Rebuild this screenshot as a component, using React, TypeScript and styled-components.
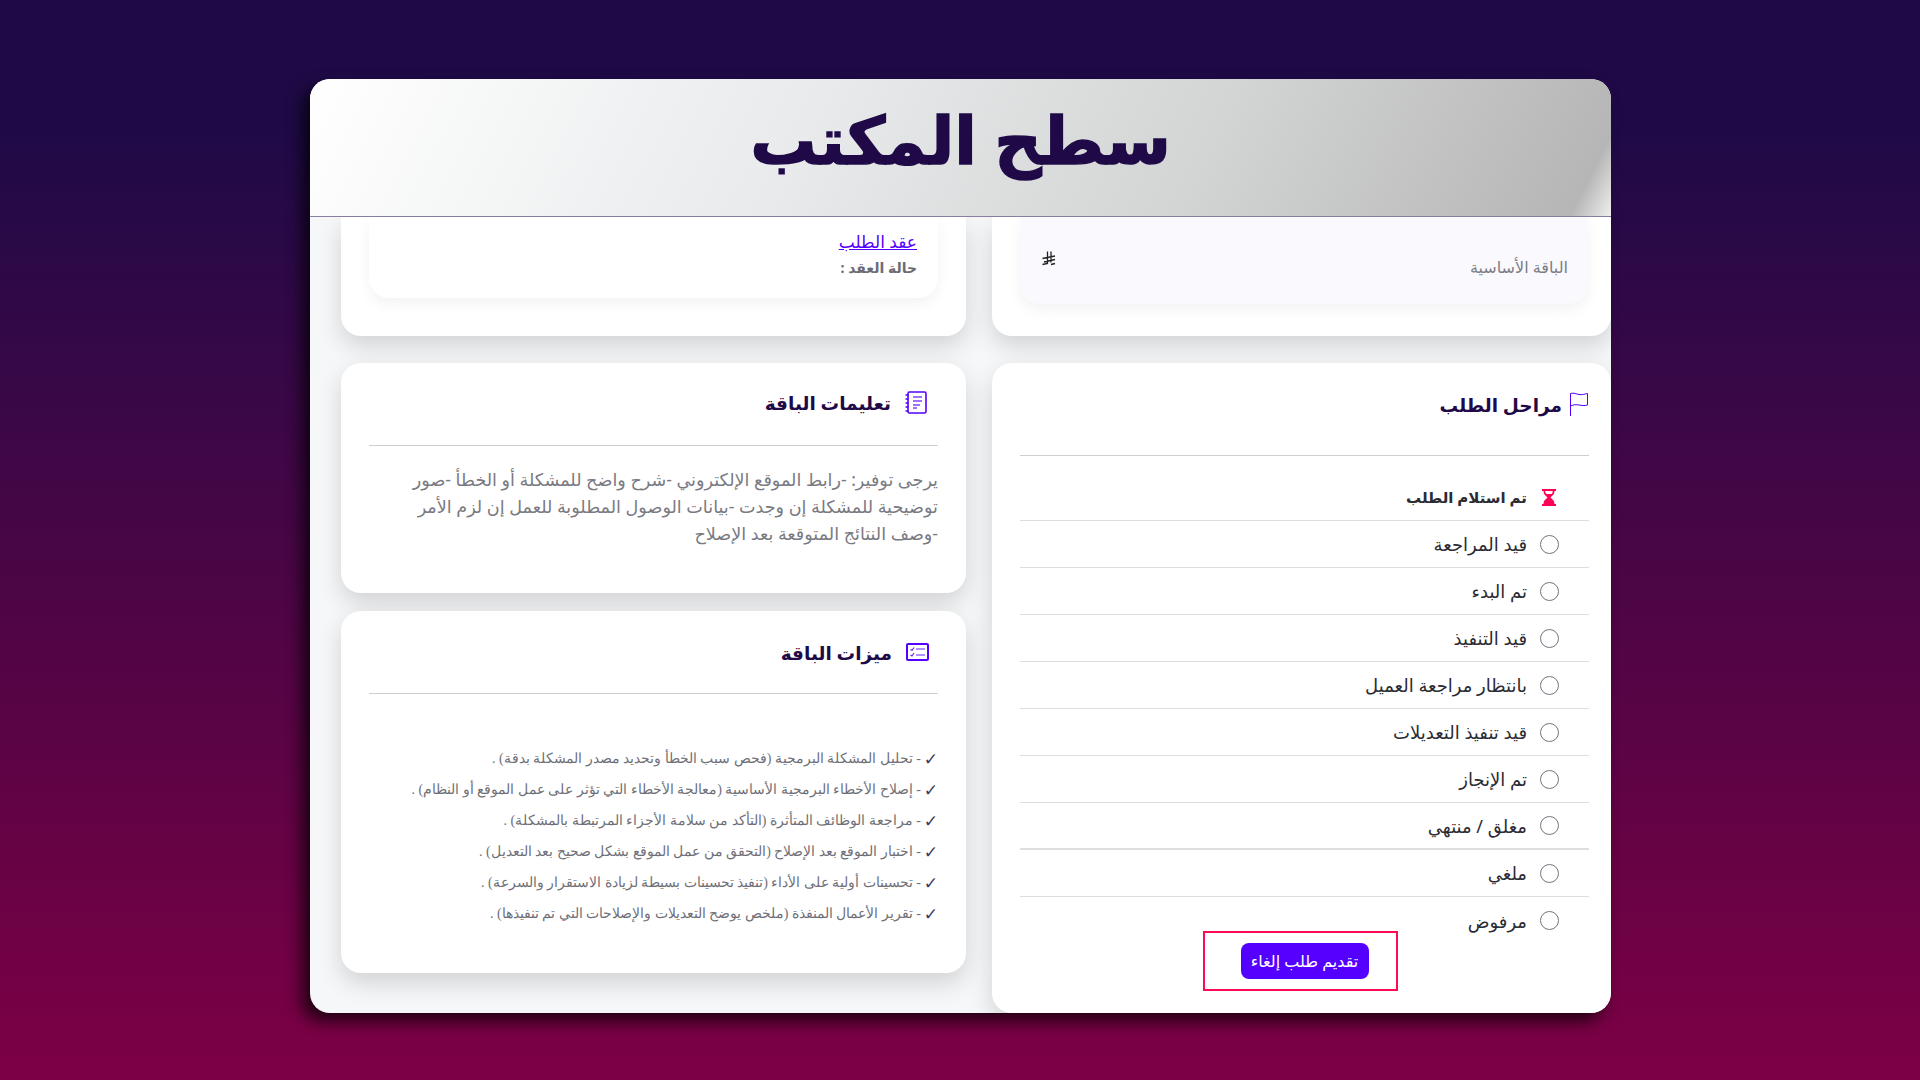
import styled, { createGlobalStyle } from "styled-components";

const GlobalStyle = createGlobalStyle`
  html, body {
    margin: 0;
    padding: 0;
    height: 100%;
  }
  body {
    font-family: "Noto Sans", "DejaVu Sans", sans-serif;
  }
  * {
    box-sizing: border-box;
  }
`

const Page = styled.div`
  width: 100%;
  height: 1080px;
  overflow: hidden;
  padding: 79px 309px 67px 310px;
  background: linear-gradient(180deg, #1f0a47 0%, #1f0a47 12%, #7d0044 100%);
`

const Window = styled.div`
  width: 1301px;
  height: 934px;
  direction: rtl;
  display: flex;
  flex-direction: column;
  overflow: hidden;
  background: #f6f7f9;
  border-radius: 20px;
  box-shadow: -8px 8px 16px rgba(0, 0, 0, 0.72);
`

const Header = styled.header`
  height: 138px;
  flex: none;
  display: flex;
  align-items: center;
  justify-content: center;
  padding-bottom: 20px;
  border-bottom: 1px solid #8a7ea0;
  background: linear-gradient(117deg, #ffffff 0%, #e8eaeb 38%, #d3d4d4 68%, #b6b6b6 97%, #efefef 100%);
`

const Title = styled.h1`
  margin: 0;
  font-size: 66px;
  font-weight: 700;
  color: #1f0a47;
  -webkit-text-stroke: 1.5px #1f0a47;
`

const Content = styled.main`
  flex: 1;
  display: grid;
  grid-template-columns: 619px 625px;
  grid-template-rows: 119px 650px;
  column-gap: 26px;
  row-gap: 27px;
  padding-left: 31px;
  overflow: hidden;
`

const ClippedCard = styled.section<{ tinted?: boolean }>`
  background: #fff;
  border-radius: 0 0 20px 20px;
  box-shadow: 0 10px 24px rgba(0, 0, 0, 0.15);
  padding: ${props => props.tinted ? "0 23px 0 28px" : "0 28px"};
`

const SummaryBox = styled.div<{ tinted?: boolean }>`
  display: flex;
  height: ${props => props.tinted ? "87px" : "81px"};
  padding: ${props => props.tinted ? "15px 20px 0 22px" : "12px 21px 0"};
  justify-content: space-between;
  background: ${props => props.tinted ? "#f9f9fe" : "#fff"};
  border-radius: 0 0 20px 20px;
  box-shadow: 0 6px 14px rgba(0, 0, 0, 0.05);
`

const Muted = styled.span`
  align-self: flex-end;
  margin-bottom: 27px;
  font-size: 16px;
  line-height: 20px;
  color: #7d7d85;
`

const RiyalSlot = styled.span`
  display: block;
  height: 15px;
  margin-top: 17px;
`

const ContractLink = styled.a`
  display: block;
  font-size: 17px;
  line-height: 26px;
  font-weight: 500;
  color: #5500ff;
  text-decoration: underline;
`

const ContractState = styled.div`
  font-size: 14px;
  line-height: 26px;
  font-weight: 700;
  color: #6c6c74;
`

const Card = styled.section`
  background: #fff;
  border-radius: 20px;
  box-shadow: 0 10px 24px rgba(0, 0, 0, 0.15);
  padding: 0 28px;
`

const StagesCard = styled(Card)`
  height: 650px;
  padding: 0 22px 0 28px;
`

const LeftColumn = styled.div`
  display: flex;
  flex-direction: column;
  gap: 18px;
`

const CardHead = styled.div<{ height: number; inset: number; lift: number }>`
  height: ${props => props.height}px;
  display: flex;
  align-items: center;
  gap: ${props => props.inset === 0 ? "7px" : "14px"};
  padding-right: ${props => props.inset}px;
  padding-bottom: ${props => props.lift}px;
  border-bottom: 1px solid #cfcfcf;
`

const CardTitle = styled.h2`
  margin: 0;
  font-size: 18.5px;
  font-weight: 700;
  color: #1f0a47;
`

const StageList = styled.ul`
  list-style: none;
  margin: 18px 0 0;
  padding: 0;
`

const StageRow = styled.li<{ heavyLine?: boolean; active?: boolean }>`
  height: 47px;
  display: flex;
  align-items: center;
  gap: 12px;
  padding-right: 30px;
  font-size: ${props => props.active ? "15px" : "18px"};
  font-weight: ${props => props.active ? 700 : 400};
  color: #2b2b33;
  border-bottom: ${props => props.heavyLine ? "2px" : "1px"} solid #dedede;

  &:last-child {
    border-bottom: none;
  }
`

const IconSlot = styled.span`
  width: 20px;
  height: 20px;
  flex: none;
  display: flex;
  align-items: center;
  justify-content: center;
`

const Radio = styled.span`
  width: 19px;
  height: 19px;
  flex: none;
  border: 1.5px solid #6f7580;
  border-radius: 50%;
`

const ActionFrame = styled.div`
  width: 195px;
  height: 60px;
  margin: -13px 191px 0 0;
  padding-left: 8px;
  display: flex;
  align-items: center;
  justify-content: center;
  border: 2px solid #ff0a54;
`

const CancelButton = styled.button`
  width: 128px;
  height: 36px;
  border: none;
  border-radius: 8px;
  background: #5500ff;
  color: #fff;
  font-family: inherit;
  font-size: 16px;
`

const InstructionsCard = styled(Card)`
  height: 230px;
`

const Instructions = styled.p`
  margin: 20px 0 0;
  font-size: 17.6px;
  line-height: 27px;
  color: #7a7a82;
`

const FeaturesCard = styled(Card)`
  height: 362px;
`

const FeatureList = styled.ul`
  list-style: none;
  margin: 49px 0 0;
  padding: 0;
`

const FeatureRow = styled.li`
  height: 31px;
  display: flex;
  align-items: center;
  gap: 5px;
  font-family: "Liberation Serif", "DejaVu Serif", serif;
  font-size: 14px;
  color: #6f6f77;
`

const Check = styled.span`
  width: 12px;
  flex: none;
  color: #3d3d5c;
  font-family: "DejaVu Sans", sans-serif;
  font-size: 17px;
  font-weight: 700;
`

const FlagIcon = () => (
  <svg width="20" height="24" viewBox="0 0 20 24" fill="none" stroke="#5500ff" strokeWidth="1">
    <path d="M1.5 24V1.5C5 0.5 7 2 10 2.5S16 2 18.5 1.5V13C15 14 13 13.5 10 13S5 12.5 1.5 14" />
  </svg>
)

const HourglassIcon = () => (
  <svg width="14" height="17" viewBox="0 0 14 17" fill="#ff0055">
    <path d="M0 0H14V2H12.5C12.5 6 9.5 7 8.5 8.5C9.5 10 12.5 11 12.5 15H14V17H0V15H1.5C1.5 11 4.5 10 5.5 8.5C4.5 7 1.5 6 1.5 2H0ZM3.2 2C3.3 3.5 3.8 4.5 4.5 5H9.5C10.2 4.5 10.7 3.5 10.8 2Z" />
  </svg>
)

const NotebookIcon = () => (
  <svg width="22" height="23" viewBox="0 0 22 23" fill="none">
    <rect x="3" y="1" width="18" height="21" rx="1.5" stroke="#5500ff" strokeWidth="1.6" />
    <path d="M8 5H17V7H8ZM8 9H17V11H8ZM8 13H15V15H8ZM8 16H12V18H8Z" fill="#a070ff" />
    <path d="M0.5 4H3.5M0.5 8H3.5M0.5 12H3.5M0.5 16H3.5M0.5 20H3.5" stroke="#5500ff" strokeWidth="1.6" />
  </svg>
)

const ChecklistIcon = () => (
  <svg width="23" height="18" viewBox="0 0 23 18" fill="none">
    <rect x="1" y="1" width="21" height="16" rx="1" stroke="#5500ff" strokeWidth="2" />
    <path d="M4.5 6.5L6 7.5L8 4.5M4.5 12L6 13L8 10" stroke="#6a20ff" strokeWidth="1.2" />
    <path d="M10 6H19M10 12H19" stroke="#b090ff" strokeWidth="2" />
  </svg>
)

const RiyalIcon = () => (
  <svg width="14" height="15" viewBox="0 0 14 15" fill="none" stroke="#222" strokeWidth="1.3">
    <path d="M5.5 0.5V12.5L0.5 13.5M9 0.5V11.5M0.5 7.5L13 5M2 11L13 8.5M9 13.5L13 12.5" />
  </svg>
)

const stages = [
  "قيد المراجعة",
  "تم البدء",
  "قيد التنفيذ",
  "بانتظار مراجعة العميل",
  "قيد تنفيذ التعديلات",
  "تم الإنجاز",
  "مغلق / منتهي",
  "ملغي",
  "مرفوض",
]

const features = [
  "تحليل المشكلة البرمجية (فحص سبب الخطأ وتحديد مصدر المشكلة بدقة) .",
  "إصلاح الأخطاء البرمجية الأساسية (معالجة الأخطاء التي تؤثر على عمل الموقع أو النظام) .",
  "مراجعة الوظائف المتأثرة (التأكد من سلامة الأجزاء المرتبطة بالمشكلة) .",
  "اختبار الموقع بعد الإصلاح (التحقق من عمل الموقع بشكل صحيح بعد التعديل) .",
  "تحسينات أولية على الأداء (تنفيذ تحسينات بسيطة لزيادة الاستقرار والسرعة) .",
  "تقرير الأعمال المنفذة (ملخص يوضح التعديلات والإصلاحات التي تم تنفيذها) .",
]

export default function App() {
  return (
    <Page>
      <GlobalStyle />
      <Window>
        <Header>
          <Title>سطح المكتب</Title>
        </Header>
        <Content>
          <ClippedCard tinted>
            <SummaryBox tinted>
              <Muted>الباقة الأساسية</Muted>
              <RiyalSlot><RiyalIcon /></RiyalSlot>
            </SummaryBox>
          </ClippedCard>
          <ClippedCard>
            <SummaryBox>
              <div>
                <ContractLink href="#">عقد الطلب</ContractLink>
                <ContractState>حالة العقد :</ContractState>
              </div>
            </SummaryBox>
          </ClippedCard>

          <StagesCard>
            <CardHead height={93} inset={0} lift={10}>
              <FlagIcon />
              <CardTitle>مراحل الطلب</CardTitle>
            </CardHead>
            <StageList>
              <StageRow active>
                <IconSlot><HourglassIcon /></IconSlot>
                تم استلام الطلب
              </StageRow>
              {stages.map((stage, i) => (
                <StageRow key={stage} heavyLine={i === 6}>
                  <IconSlot><Radio /></IconSlot>
                  {stage}
                </StageRow>
              ))}
            </StageList>
            <ActionFrame>
              <CancelButton>تقديم طلب إلغاء</CancelButton>
            </ActionFrame>
          </StagesCard>

          <LeftColumn>
            <InstructionsCard>
              <CardHead height={83} inset={11} lift={4}>
                <NotebookIcon />
                <CardTitle>تعليمات الباقة</CardTitle>
              </CardHead>
              <Instructions>
                يرجى توفير: -رابط الموقع الإلكتروني -شرح واضح للمشكلة أو الخطأ -صور
                توضيحية للمشكلة إن وجدت -بيانات الوصول المطلوبة للعمل إن لزم الأمر
                -وصف النتائج المتوقعة بعد الإصلاح
              </Instructions>
            </InstructionsCard>
            <FeaturesCard>
              <CardHead height={83} inset={9} lift={0}>
                <ChecklistIcon />
                <CardTitle>ميزات الباقة</CardTitle>
              </CardHead>
              <FeatureList>
                {features.map(text => (
                  <FeatureRow key={text}>
                    <Check>✓</Check>
                    <span>- {text}</span>
                  </FeatureRow>
                ))}
              </FeatureList>
            </FeaturesCard>
          </LeftColumn>
        </Content>
      </Window>
    </Page>
  )
}
